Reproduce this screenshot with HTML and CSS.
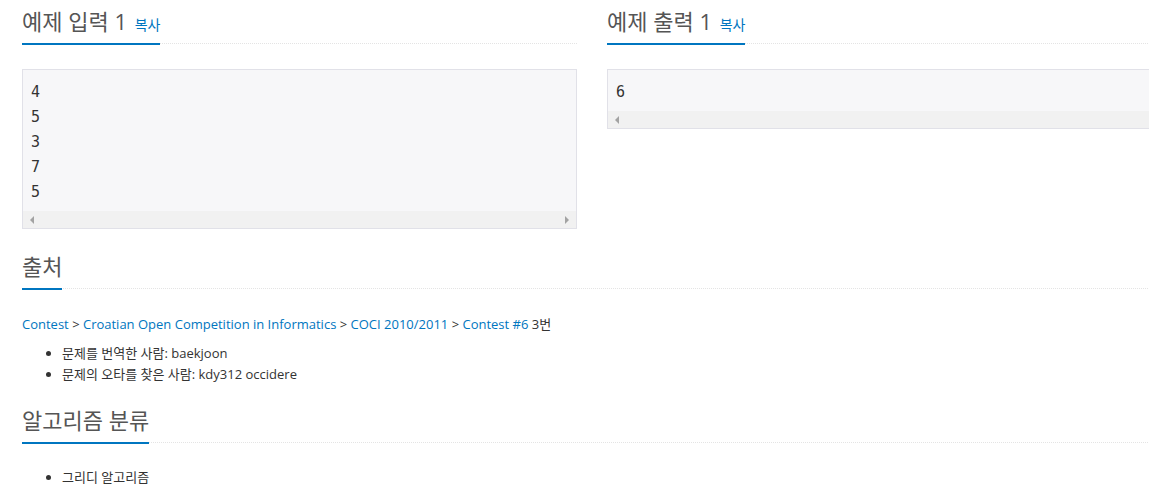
FILE: index.html
```html
<!DOCTYPE html>
<html>
<head>
    <title>문제 - 예제</title>
    <meta charset="utf-8">
    <link rel="stylesheet" href="styles.css">
</head>
<body>
    <div class="container">
        <!-- Sample input / output -->
        <div class="row">
            <div class="col-half">
                <div class="headline">
                    <h2>예제 입력 1 <a class="copy-button" href="#">복사</a></h2>
                </div>
                <div class="sample-box">
                    <pre class="sampledata">4
5
3
7
5</pre>
                    <div class="fake-scroll">
                        <span class="arrow-left"></span>
                        <span class="arrow-right"></span>
                    </div>
                </div>
            </div>
            <div class="col-half">
                <div class="headline">
                    <h2>예제 출력 1 <a class="copy-button" href="#">복사</a></h2>
                </div>
                <div class="sample-box">
                    <pre class="sampledata">6</pre>
                    <div class="fake-scroll">
                        <span class="arrow-left"></span>
                        <span class="arrow-right"></span>
                    </div>
                </div>
            </div>
        </div>

        <!-- Source -->
        <section class="section source">
            <div class="headline">
                <h2>출처</h2>
            </div>
            <p>
                <a href="#">Contest</a> &gt; <a href="#">Croatian Open Competition in Informatics</a> &gt; <a href="#">COCI 2010/2011</a> &gt; <a href="#">Contest #6</a> 3번
            </p>
            <ul>
                <li>문제를 번역한 사람: <span class="user">baekjoon</span></li>
                <li>문제의 오타를 찾은 사람: <span class="user">kdy312</span> <span class="user">occidere</span></li>
            </ul>
        </section>

        <!-- Tags -->
        <section class="section tags">
            <div class="headline">
                <h2>알고리즘 분류</h2>
            </div>
            <ul>
                <li>그리디 알고리즘</li>
            </ul>
        </section>
    </div>
</body>
</html>
```

FILE: styles.css
```css
* {
    box-sizing: border-box;
}

html, body {
    margin: 0;
    padding: 0;
    overflow: hidden;
}

body {
    font-family: "Open Sans", "Noto Sans CJK KR", sans-serif;
    font-size: 13px;
    color: #333;
    background: #fff;
}

a {
    color: #0076c0;
    text-decoration: none;
}

/* Main container, wider than the window like the original page */
.container {
    width: 1162px;
    padding-left: 22px;
}

.row {
    display: flex;
    gap: 30px;
}
.col-half {
    width: 555px;
    flex: none;
}

/* Section heading with blue underline and dotted rule */
.headline {
    display: flex;
    border-bottom: 1px dotted #e4e4e4;
    margin-bottom: 25px;
}
.headline h2 {
    height: 45px; /* fixed so the mixed fonts don't grow the line */
    margin: 0 0 -2px 0;
    padding: 6px 0 0 0;
    font-size: 22px;
    font-weight: normal;
    line-height: 30px;
    color: #555;
    border-bottom: 2px solid #0076c0;
}
.copy-button {
    font-size: 14px;
    margin-left: 2px;
}

/* Sample data box */
.sample-box {
    border: 1px solid #e1e1e8;
    background: #f7f7f9;
    margin-bottom: 16px;
}
.sampledata {
    margin: 0;
    padding: 10px 8px 6px 8px;
    font-family: "DejaVu Sans Mono", monospace;
    font-size: 15px;
    line-height: 25px;
    color: #333;
}
.fake-scroll {
    height: 17px;
    background: #f1f1f1;
    display: flex;
    align-items: center;
    justify-content: space-between;
    padding: 0 7px;
}
.arrow-left {
    width: 0;
    height: 0;
    border-top: 4px solid transparent;
    border-bottom: 4px solid transparent;
    border-right: 4px solid #a3a3a3;
}
.arrow-right {
    width: 0;
    height: 0;
    border-top: 4px solid transparent;
    border-bottom: 4px solid transparent;
    border-left: 4px solid #a3a3a3;
}

/* Source and tags */
.section p {
    margin: 0;
    line-height: 21px;
}
.section ul {
    margin: 8px 0 0 0;
    padding-left: 40px;
    line-height: 21px;
}
.source {
    margin-bottom: 14px;
}
.tags .headline {
    margin-bottom: 24px;
}
.user {
    color: #333;
}
```
